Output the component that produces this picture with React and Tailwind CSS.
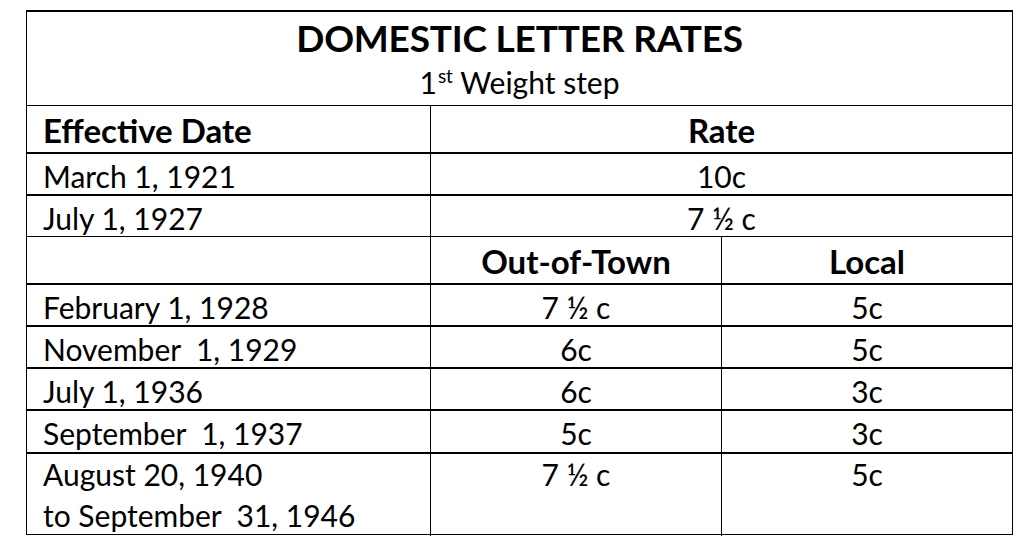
const dataRows = [
  { date: "February 1, 1928", out: "7 ½ c", local: "5c" },
  { date: "November  1, 1929", out: "6c", local: "5c" },
  { date: "July 1, 1936", out: "6c", local: "3c" },
  { date: "September  1, 1937", out: "5c", local: "3c", tall: true },
];

const DateCell = ({ children, className = "" }) => (
  <div className={`flex items-center pl-[16px] whitespace-pre ${className}`}>{children}</div>
);

const Cell = ({ children, className = "" }) => (
  <div className={`flex items-center justify-center border-l border-black whitespace-pre ${className}`}>
    {children}
  </div>
);

export default function App() {
  return (
    <div className="w-[1032px] h-[555px] bg-white pt-[10px] pl-[26px] text-black font-['Lato',sans-serif]">
      <div className="w-[987px] border-t-2 border-x border-b border-black">
        {/* title block */}
        <div className="h-[93px] flex flex-col items-center">
          <div className="text-[37px] font-bold leading-none mt-[7px] tracking-[-0.2px]">
            DOMESTIC LETTER RATES
          </div>
          <div className="text-[30px] leading-none mt-[11px]">
            1<sup className="text-[19px] -top-[11px] ml-[1px]">st</sup> Weight step
          </div>
        </div>

        {/* header */}
        <div className="grid grid-cols-[403px_1fr] h-[47px] border-t border-black text-[33px] font-bold">
          <DateCell>Effective Date</DateCell>
          <Cell>Rate</Cell>
        </div>

        <div className="grid grid-cols-[403px_1fr] h-[42px] border-t-2 border-black text-[30px]">
          <DateCell className="pb-[3px]">March 1, 1921</DateCell>
          <Cell className="pb-[3px]">10c</Cell>
        </div>

        <div className="grid grid-cols-[403px_1fr] h-[42px] border-t-2 border-black text-[30px]">
          <DateCell className="pb-[3px]">July 1, 1927</DateCell>
          <Cell className="pb-[3px]">7 ½ c</Cell>
        </div>

        {/* split header */}
        <div className="grid grid-cols-[403px_291px_1fr] h-[47px] border-t border-black text-[33px] font-bold">
          <DateCell></DateCell>
          <Cell>Out-of-Town</Cell>
          <Cell>Local</Cell>
        </div>

        {dataRows.map((r) => (
          <div
            key={r.date}
            className={`grid grid-cols-[403px_291px_1fr] border-t-2 border-black text-[30px] ${r.tall ? "h-[43px]" : "h-[42px]"}`}
          >
            <DateCell className="pb-[3px]">{r.date}</DateCell>
            <Cell className="pb-[3px]">{r.out}</Cell>
            <Cell className="pb-[3px]">{r.local}</Cell>
          </div>
        ))}

        <div className="grid grid-cols-[403px_291px_1fr] h-[82px] border-t-2 border-black text-[30px] leading-[41px]">
          <div className="pl-[16px] whitespace-pre">
            <div>August 20, 1940</div>
            <div>to September  31, 1946</div>
          </div>
          <div className="border-l border-black text-center">7 ½ c</div>
          <div className="border-l border-black text-center">5c</div>
        </div>
      </div>
    </div>
  );
}
